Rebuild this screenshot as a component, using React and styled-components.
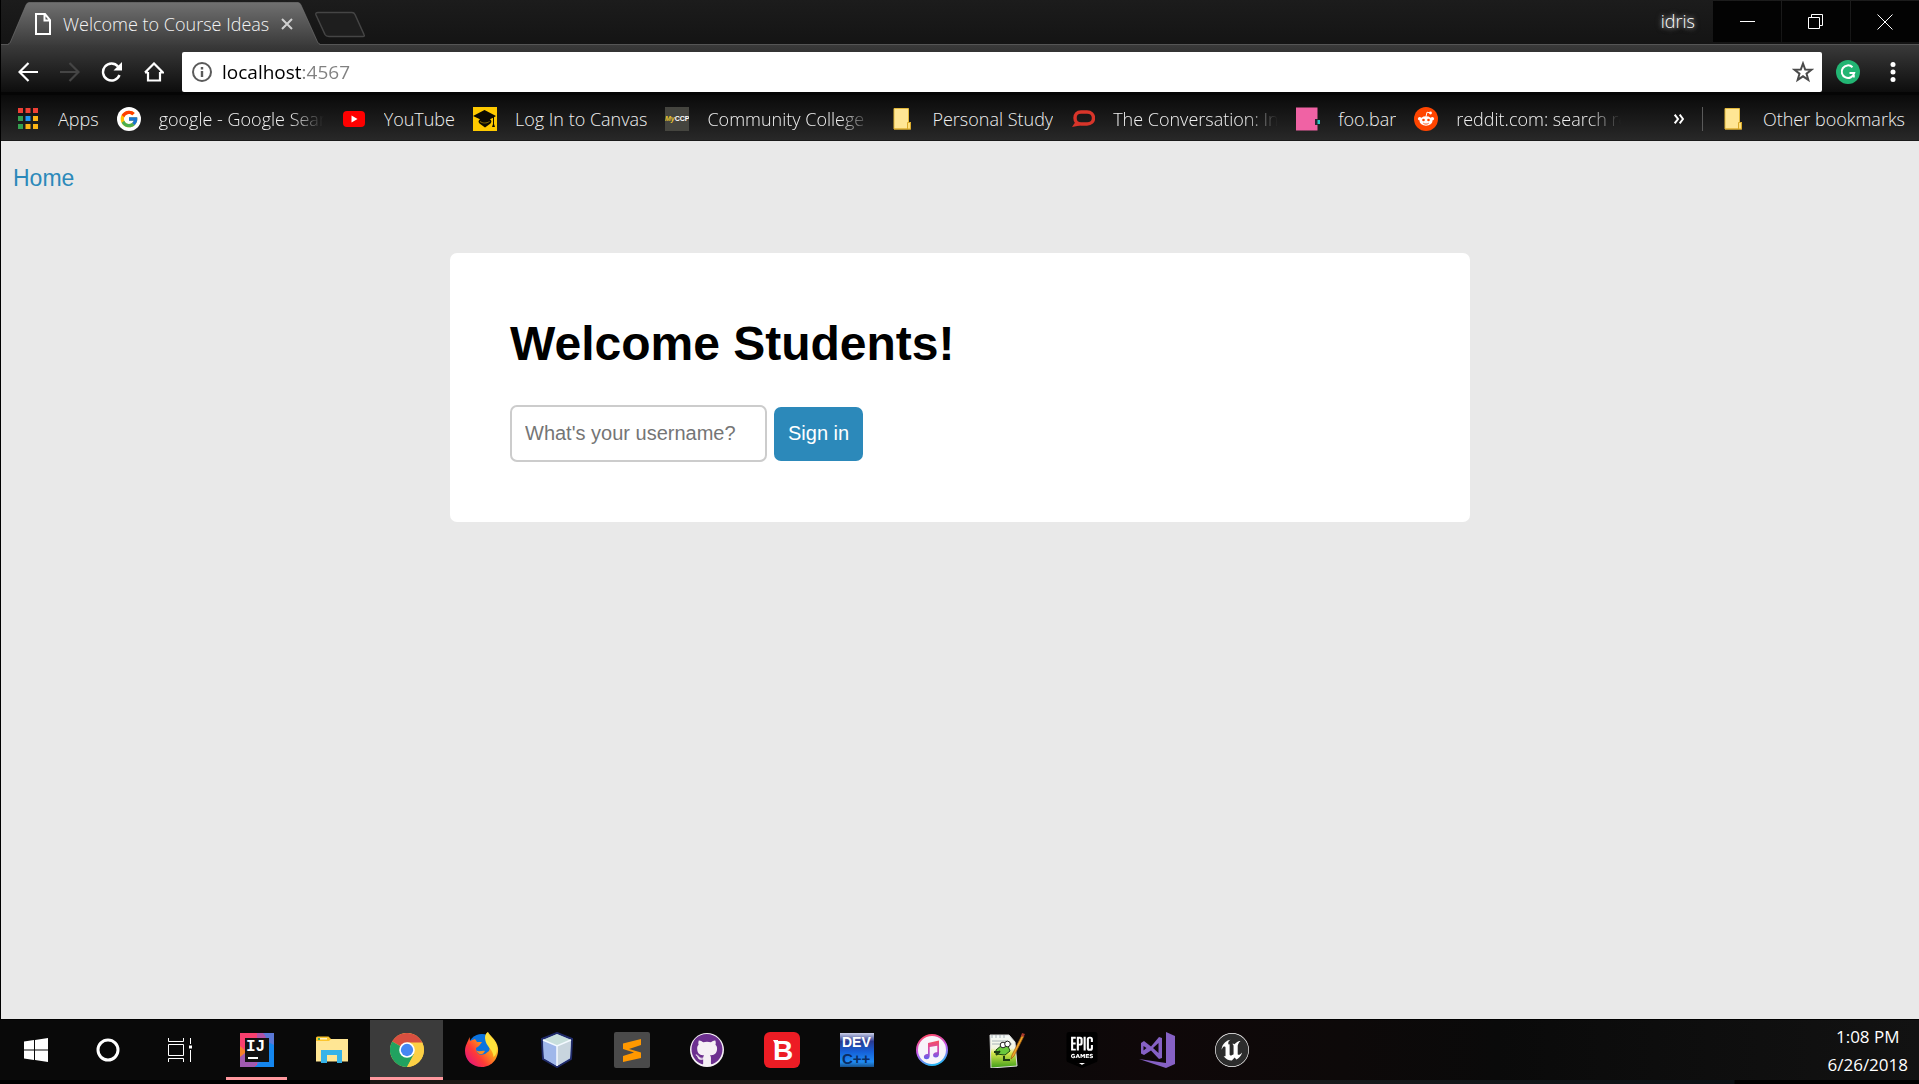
import React from 'react';
import styled, { createGlobalStyle } from 'styled-components';
import { FcGoogle } from 'react-icons/fc';
import { FaGithub } from 'react-icons/fa';
import { SiEpicgames, SiUnrealengine } from 'react-icons/si';

const GlobalStyle = createGlobalStyle`
  * { box-sizing: border-box; }
  body { margin: 0; background: #000; }
  button, input { font: inherit; }
`;

const chromeFont = `'Open Sans', 'Noto Sans', sans-serif`;

const Screen = styled.div`
  min-height: 100vh;
  display: flex;
  flex-direction: column;
  font-family: ${chromeFont};
`;

const Browser = styled.div`
  flex: 1;
  display: flex;
  flex-direction: column;
  border-left: 1px solid #000;
`;

/* ---------- title bar ---------- */
const TitleBar = styled.header`
  height: 44px;
  display: flex;
  align-items: flex-start;
  background: linear-gradient(#1c1c1c, #141414);
`;

const Tab = styled.div`
  position: relative;
  width: 312px;
  height: 44px;
  margin-left: 7px;
  padding: 4px 29px 0 27px;
  display: flex;
  align-items: center;
  gap: 12px;
  color: #f4f4f4;
`;

const TabShape = styled.svg`
  position: absolute;
  left: 0;
  bottom: -1px;
`;

const TabTitle = styled.span`
  position: relative;
  flex: 1;
  white-space: nowrap;
  font-size: 18px;
  font-weight: 300;
  line-height: 24px;
`;

const TabGlyph = styled.svg`
  position: relative;
  flex: none;
`;

const PlainButton = styled.button`
  border: 0;
  padding: 0;
  background: none;
  color: inherit;
  display: flex;
  align-items: center;
  justify-content: center;
  flex: none;
`;

const NewTab = styled(PlainButton)`
  margin: 11px 0 0 -6px;
`;

const Profile = styled(PlainButton)`
  margin-left: auto;
  margin-right: 18px;
  height: 42px;
  color: #fff;
  font-size: 18px;
  font-weight: 300;
  text-shadow: 0 0 4px #aaa, 0 0 6px #777;
`;

const WindowControls = styled.div`
  display: flex;
  gap: 1px;
  padding-top: 1px;
`;

const WindowButton = styled(PlainButton)`
  width: 68px;
  height: 41px;
  background: #030303;
`;

/* ---------- toolbar ---------- */
const Toolbar = styled.div`
  height: 51px;
  display: flex;
  align-items: center;
  padding: 0 4px 0 6px;
  background: linear-gradient(#3a3a3a, #0d0d0d);
  border-top: 1px solid #555;
  border-bottom: 3px solid #050505;
`;

const ToolButton = styled(PlainButton)`
  width: 42px;
  height: 40px;
`;

const Omnibox = styled.label`
  flex: 1;
  height: 40px;
  margin: 7px 3px 0 7px;
  padding: 0 8px 0 10px;
  display: flex;
  align-items: center;
  background: #fff;
  border-radius: 2px;
`;

const Address = styled.input`
  flex: 1;
  min-width: 0;
  height: 36px;
  margin-left: 10px;
  padding: 0;
  border: 0;
  outline: 0;
  font-size: 19px;
  color: transparent;
  background: linear-gradient(90deg, #000 81px, #808080 81px);
  background-clip: text;
  -webkit-background-clip: text;
`;

const ToolGroup = styled.div`
  display: flex;
  padding-top: 7px;
`;

const WideToolButton = styled(ToolButton)`
  width: 45px;
`;

/* ---------- bookmarks ---------- */
const Bookmarks = styled.nav`
  height: 46px;
  display: flex;
  align-items: center;
  gap: 18px;
  padding: 2px 14px 0 15px;
  background: linear-gradient(#0a0a0a, #282828);
  border-bottom: 1px solid #1a1a1a;
`;

const Bookmark = styled.a`
  display: flex;
  align-items: center;
  gap: 18px;
  flex: none;
  color: #f0f0f0;
  text-decoration: none;
  font-size: 18px;
  font-weight: 300;
  line-height: 26px;
`;

const BookmarkIcon = styled.span`
  width: 24px;
  height: 24px;
  display: flex;
  align-items: center;
  justify-content: center;
`;

const BookmarkLabel = styled.span`
  white-space: nowrap;
  overflow: hidden;
  width: ${(p) => (p.$clipped ? '165px' : 'auto')};
  mask-image: ${(p) => (p.$clipped ? 'linear-gradient(90deg, #000 132px, transparent 165px)' : 'none')};
`;

const Overflow = styled(PlainButton)`
  margin-left: auto;
`;

const Divider = styled.span`
  width: 1px;
  height: 24px;
  background: #5a5a5a;
`;

/* ---------- page ---------- */
const Page = styled.main`
  flex: 1;
  background: #e9e9e9;
  font-family: 'Liberation Sans', Arial, sans-serif;
`;

const PageNav = styled.div`
  padding: 23px 12px 0;
  font-size: 23px;
  line-height: 28px;
`;

const HomeLink = styled.a`
  color: #2c89ba;
  text-decoration: none;
`;

const Card = styled.section`
  width: calc(100% - 898px);
  min-width: 560px;
  margin: 61px auto 0;
  padding: 60px;
  background: #fff;
  border-radius: 7px;
`;

const Heading = styled.h1`
  margin: 0 0 30px;
  font-size: 48px;
  line-height: 62px;
  color: #000;
`;

const Form = styled.form`
  display: flex;
  align-items: center;
  gap: 7px;
`;

const Username = styled.input`
  width: 257px;
  height: 57px;
  padding: 0 13px;
  border: 2px solid #ccc;
  border-radius: 7px;
  font-size: 20px;
  background: #fff;
  &::placeholder { color: #757575; opacity: 1; }
`;

const SignIn = styled.button`
  height: 54px;
  padding: 0 14px;
  border: 0;
  border-radius: 7px;
  font-size: 20px;
  color: #fff;
  background: #2c89ba;
`;

/* ---------- taskbar ---------- */
const Taskbar = styled.footer`
  height: 61px;
  display: flex;
  border-top: 1px solid #000;
  background: linear-gradient(90deg, #090909 0, #090909 50%, #0f0809 60%, #0d0909 70%, #0a0a0a 78%, #121212 100%);
`;

const SystemButton = styled(PlainButton)`
  width: 72px;
`;

const Apps = styled.div`
  display: flex;
  gap: 2px;
  margin-left: 4px;
`;

const AppButton = styled(PlainButton)`
  position: relative;
  width: 73px;
  background: ${(p) => (p.$active ? '#3b3b3b' : 'none')};
  &::after {
    content: '';
    display: ${(p) => (p.$active || p.$running ? 'block' : 'none')};
    position: absolute;
    bottom: 0;
    left: ${(p) => (p.$active ? '0' : '6px')};
    right: ${(p) => (p.$active ? '0' : '6px')};
    height: 3px;
    background: #ff989e;
  }
`;

const Clock = styled.time`
  margin-left: auto;
  padding: 3px 11px 0 0;
  color: #fff;
  font-size: 17px;
  line-height: 28px;
  text-align: center;
`;

const Desktop = styled.div`
  height: 4px;
  background: linear-gradient(90deg, #000 370px, #1c1714 370px, #201c18 760px, #1b1d1e 1200px, #0a1014 1734px, #000 1735px);
`;

/* ---------- icons ---------- */
const Folder = () => (
  <svg width="18" height="24" viewBox="0 0 18 24">
    <path d="M1 1.5h14.5v14H18V22H1z" fill="#ffe694" stroke="#e3b93c" strokeWidth="1" />
    <path d="M1 22h16.5v-6.5h-3V22" fill="#ffe07a" stroke="#d9a92a" strokeWidth="1" />
  </svg>
);

const AppsGrid = () => {
  const colors = ['#ee4035', '#ee4035', '#ee4035', '#34a050', '#2196f3', '#fdb515', '#34a050', '#fdb515', '#fdb515'];
  return (
    <svg width="20" height="21" viewBox="0 0 20 21">
      {colors.map((c, i) => (
        <rect key={i} x={(i % 3) * 7.5} y={Math.floor(i / 3) * 8} width="5" height="5" fill={c} />
      ))}
    </svg>
  );
};

const GoogleMark = () => (
  <svg width="24" height="24" viewBox="0 0 24 24">
    <circle cx="12" cy="12" r="12" fill="#fff" />
    <FcGoogle x="2" y="2" size="20" />
  </svg>
);

const YouTube = () => (
  <svg width="22" height="16" viewBox="0 0 22 16">
    <rect width="22" height="16" rx="4" fill="#f00" />
    <path d="M8.5 4.5l6 3.5-6 3.5z" fill="#fff" />
  </svg>
);

const Canvas = () => (
  <svg width="24" height="24" viewBox="0 0 24 24">
    <rect width="24" height="24" fill="#ffca00" />
    <path d="M11.5 3L23 9l-2 1.200V17l1 3h-3l1-3v-6.300l-3 1.600c2 1.500 1.500 3 .5 4.200l-5.500 4-5.500-4c-1.500-1.500-1.200-3 .5-4.200L0 9z" fill="#0c0a02" />
    <path d="M7 14.500c3 2 6.500 2 9.500 0" stroke="#8a6f08" strokeWidth="1" fill="none" />
  </svg>
);

const MyCcp = () => (
  <svg width="24" height="24" viewBox="0 0 24 24" fontFamily="Liberation Sans, sans-serif" fontSize="7" fontWeight="700">
    <rect width="24" height="24" fill="#45453f" />
    <text x="0" y="14" fill="#fff"><tspan fill="#e8c531" fontStyle="italic">My</tspan>CCP</text>
  </svg>
);

const Conversation = () => (
  <svg width="24" height="18" viewBox="0 0 24 18">
    <path d="M10 2h6c4 0 6.500 2.500 6.500 6S20 14 16 14h-6c-4 0-6-2.500-6-6s2-6 6-6z" fill="none" stroke="#d8352a" strokeWidth="3.400" />
    <path d="M5 11l-4 6 8-1.500z" fill="#d8352a" />
  </svg>
);

const FooBar = () => (
  <svg width="24" height="24" viewBox="0 0 24 24">
    <rect y="0.500" width="21.500" height="23" fill="#f062a4" />
    <rect x="19" y="12" width="3" height="6" fill="#222b33" />
    <rect x="21.500" y="13" width="2.500" height="4" fill="#2cc4c4" />
  </svg>
);

const Reddit = () => (
  <svg width="24" height="24" viewBox="0 0 24 24">
    <circle cx="12" cy="12" r="12" fill="#ff4500" />
    <ellipse cx="12" cy="14" rx="6.500" ry="4.700" fill="#fff" />
    <circle cx="5.700" cy="11.700" r="1.800" fill="#fff" />
    <circle cx="18.300" cy="11.700" r="1.800" fill="#fff" />
    <path d="M12 9.500l1-4.300 3 .7" fill="none" stroke="#fff" strokeWidth="1" />
    <circle cx="16.500" cy="6" r="1.400" fill="#fff" />
    <circle cx="9.500" cy="13" r="1.300" fill="#ff4500" />
    <circle cx="14.500" cy="13" r="1.300" fill="#ff4500" />
    <path d="M9.300 16.200c1.500 1.200 3.900 1.200 5.400 0" fill="none" stroke="#ff4500" strokeWidth="0.900" />
  </svg>
);

const IntelliJ = () => (
  <svg width="34" height="34" viewBox="0 0 34 34">
    <rect width="34" height="34" fill="#f8406f" />
    <path d="M17 0h17v34H17z" fill="#4a7be0" />
    <path d="M17 0h6l6 6H17z" fill="#b052a8" />
    <path d="M26 0h8v34H14l14-10z" fill="#1486ee" />
    <path d="M24 0h10v12l-6-3z" fill="#5a78d6" />
    <path d="M0 13l7 6v10L0 26z" fill="#f4812a" />
    <path d="M0 24l5-4v9h13l-4 5H0z" fill="#a05ab0" />
    <rect x="5" y="5" width="24" height="24" fill="#111" />
    <text x="6" y="18" fill="#fff" fontFamily="Liberation Mono, monospace" fontSize="16" fontWeight="700">IJ</text>
    <rect x="8" y="24" width="10" height="2" fill="#fff" />
  </svg>
);

const Explorer = () => (
  <svg width="32" height="28" viewBox="0 0 32 28">
    <path d="M0 2q0-1.500 1.500-1.500h11L15 3v4H0z" fill="#fcc52c" />
    <rect x="2" y="2" width="9" height="1.500" fill="#fff2c0" />
    <rect x="2" y="2" width="2" height="2" fill="#3fae6a" />
    <path d="M0 5h13l2-2h17v22.500H0z" fill="#ffe694" />
    <path d="M5 27V14h21v13h-5v-8H11v8z" fill="#36b3e8" />
  </svg>
);

const Chrome = () => (
  <svg width="34" height="34" viewBox="0 0 48 48">
    <circle cx="24" cy="24" r="24" fill="#fcd045" />
    <path d="M24 24L3.200 12A24 24 0 0 1 44.800 12L46 14H24z" fill="#d84f40" />
    <path d="M24 24L3.200 12A24 24 0 0 0 24 48L34.400 30z" fill="#21a260" />
    <path d="M24 13.500h21.500A24 24 0 0 1 24 48l9.500-18z" fill="#fcd045" />
    <circle cx="24" cy="24" r="11" fill="#fff" />
    <circle cx="24" cy="24" r="8.700" fill="#4587f3" />
  </svg>
);

const Firefox = () => (
  <svg width="34" height="36" viewBox="0 0 34 36">
    <defs>
      <linearGradient id="fx" x1="1" y1="0.100" x2="0.100" y2="0.900">
        <stop offset="0" stopColor="#fff14a" />
        <stop offset="0.400" stopColor="#ff9a1a" />
        <stop offset="0.700" stopColor="#ff3b36" />
        <stop offset="1" stopColor="#e3157a" />
      </linearGradient>
    </defs>
    <circle cx="17" cy="16" r="14" fill="#0a73e0" />
    <path d="M4.500 5L5 9l5-2 2 3h5l-3 4-3 2c0 6 4 8 9 6l4-3c2-5 0-9-3-13-.5-3 .5-5 2-6 2 4 9 8 10 16 1 10-6 19-16 19S0 28 0 19C0 13 3 10 4.500 5z" fill="url(#fx)" />
    <path d="M20 6c0-3 1-4.500 2.500-6 1 4 7 7 9 13 1 5 0 10-3 12 0-8-8-10-8.500-19z" fill="#ffe23b" />
    <path d="M11 18c3 3 6 0 9 1-2 4-6 5-9-1z" fill="#ff8a1d" />
  </svg>
);

const NetBeans = () => (
  <svg width="34" height="36" viewBox="0 0 34 36">
    <path d="M17 1l15 6-1 20-14 8L3 27 2 7z" fill="#a3b7ea" stroke="#1f2a68" strokeWidth="2" />
    <path d="M17 2l14 6-14 6L3 8z" fill="#c8dfdc" />
    <path d="M3 8l14 6v20L4 26z" fill="#9fb7ea" />
    <path d="M31 8l-14 6v20l13-8z" fill="#c8d5de" />
    <path d="M3 8l14 6 14-6M17 14v20" fill="none" stroke="#f3f9ff" strokeWidth="1.500" />
  </svg>
);

const Sublime = () => (
  <svg width="36" height="36" viewBox="0 0 36 36">
    <rect width="36" height="36" rx="2" fill="#4a4a4a" />
    <path d="M27 7v6L15 17l12 3.500v5.500L9 30v-6l11-3.500L9 17v-5.500z" fill="#ff9800" />
  </svg>
);

const GitHub = () => (
  <svg width="36" height="36" viewBox="0 0 36 36">
    <circle cx="18" cy="18" r="17" fill="#f5f0f5" />
    <FaGithub x="2" y="1.500" size="32" color="#6d3090" />
  </svg>
);

const Bitdefender = () => (
  <svg width="36" height="36" viewBox="0 0 36 36">
    <rect width="36" height="36" rx="6" fill="#ed1c24" />
    <path d="M9 8h5v3.500h-3z" fill="#fff" />
    <text x="9" y="28" fill="#fff" fontFamily="Liberation Sans, sans-serif" fontSize="28" fontWeight="700">B</text>
  </svg>
);

const DevCpp = () => (
  <svg width="34" height="34" viewBox="0 0 34 34" fontFamily="Liberation Sans, sans-serif" fontWeight="700">
    <defs>
      <linearGradient id="dev" x1="0" y1="0" x2="0" y2="1">
        <stop offset="0" stopColor="#ccd0e8" />
        <stop offset="0.250" stopColor="#2a3a90" />
        <stop offset="0.550" stopColor="#1560d8" />
        <stop offset="0.850" stopColor="#1f8cf4" />
        <stop offset="1" stopColor="#18528c" />
      </linearGradient>
    </defs>
    <rect width="34" height="34" fill="url(#dev)" />
    <text x="2" y="14" fontSize="14" fill="#fff">DEV</text>
    <text x="2" y="31" fontSize="15" fill="#0b2c62">C++</text>
  </svg>
);

const ITunes = () => (
  <svg width="32" height="32" viewBox="0 0 32 32">
    <defs>
      <linearGradient id="itr" x1="0.300" y1="0" x2="0.600" y2="1">
        <stop offset="0" stopColor="#ff4a6a" />
        <stop offset="0.500" stopColor="#c05af0" />
        <stop offset="1" stopColor="#26b8f4" />
      </linearGradient>
      <linearGradient id="itn" x1="0" y1="0" x2="0" y2="1">
        <stop offset="0" stopColor="#f8505a" />
        <stop offset="0.500" stopColor="#d048b8" />
        <stop offset="1" stopColor="#5a60f0" />
      </linearGradient>
    </defs>
    <circle cx="16" cy="16" r="15" fill="#f7f4fa" stroke="url(#itr)" strokeWidth="2" />
    <path d="M12 9l11-2.500v13.700c0 2-1.400 3.300-3.200 3.300-1.600 0-2.700-1-2.700-2.300 0-2.600 2.700-2.700 4.200-3.200v-6.300L13.700 13v9c0 2-1.400 3.300-3.200 3.300-1.600 0-2.600-1-2.600-2.300 0-2.700 2.700-2.700 4.100-3.200z" fill="url(#itn)" />
  </svg>
);

const Notepad = () => (
  <svg width="36" height="36" viewBox="0 0 36 36">
    <defs>
      <linearGradient id="npp" x1="0" y1="0" x2="0" y2="1">
        <stop offset="0" stopColor="#f6fafa" />
        <stop offset="0.400" stopColor="#f3f5e0" />
        <stop offset="0.550" stopColor="#d8e84c" />
        <stop offset="1" stopColor="#3c9c18" />
      </linearGradient>
    </defs>
    <path d="M1 3h19l6 7 2 24-26 2z" fill="url(#npp)" stroke="#ddd" strokeWidth="1" />
    <path d="M3 3v3M7 3v3M11 3v3M15 3v3M3 9h16M3 12h20" stroke="#a8b4b8" strokeWidth="1" />
    <path d="M7 18l6-5 6 1 2 5-5 4-9-1z" fill="#6ac83c" stroke="#1c4a10" strokeWidth="1" />
    <circle cx="14" cy="13" r="2.800" fill="#fff" stroke="#222" />
    <circle cx="18.500" cy="12" r="2.800" fill="#fff" stroke="#222" />
    <path d="M5 20h6M7 23l4-4M15 24v4h6" stroke="#1d3b12" strokeWidth="2" fill="none" />
    <path d="M33 3l2 1-10 20-3 3 1-4z" fill="#f3a626" stroke="#9c5a14" strokeWidth="0.700" />
    <path d="M33 1l3 1-1.500 3-2.500-1z" fill="#a83a2c" />
  </svg>
);

const Epic = () => (
  <svg width="34" height="36" viewBox="0 0 34 36">
    <rect x="4" y="3" width="26" height="26" fill="#fff" />
    <path d="M11 29h12l-6 4z" fill="#fff" />
    <SiEpicgames x="-1" y="0" size="36" color="#000" />
  </svg>
);

const VisualStudio = () => (
  <svg width="36" height="36" viewBox="0 0 36 36">
    <path d="M27 0l9 4v28l-9 4-27-9 27 4z" fill="#8661c5" />
    <path fillRule="evenodd" d="M2 11l3-2 7 5.500L20 5l3 1v20l-3 1-8-8.500L5 23l-3-1.500zm2.500 3v4.500L7.500 16zM19.500 11L14 16l5.500 5z" fill="#8661c5" />
  </svg>
);

const Unreal = () => (
  <svg width="34" height="34" viewBox="0 0 34 34">
    <circle cx="17" cy="17" r="16.500" fill="#2c2c2c" />
    <SiUnrealengine x="0" y="0" size="34" color="#fff" />
  </svg>
);

const bookmarks = [
  { icon: <AppsGrid />, label: 'Apps' },
  { icon: <GoogleMark />, label: 'google - Google Sear', clipped: true },
  { icon: <YouTube />, label: 'YouTube' },
  { icon: <Canvas />, label: 'Log In to Canvas' },
  { icon: <MyCcp />, label: 'Community College', clipped: true },
  { icon: <Folder />, label: 'Personal Study' },
  { icon: <Conversation />, label: 'The Conversation: In', clipped: true },
  { icon: <FooBar />, label: 'foo.bar' },
  { icon: <Reddit />, label: 'reddit.com: search re', clipped: true },
];

const apps = [
  { name: 'IntelliJ IDEA', icon: <IntelliJ />, running: true },
  { name: 'File Explorer', icon: <Explorer /> },
  { name: 'Google Chrome', icon: <Chrome />, active: true },
  { name: 'Firefox', icon: <Firefox /> },
  { name: 'NetBeans', icon: <NetBeans /> },
  { name: 'Sublime Text', icon: <Sublime /> },
  { name: 'GitHub Desktop', icon: <GitHub /> },
  { name: 'Bitdefender', icon: <Bitdefender /> },
  { name: 'Dev-C++', icon: <DevCpp /> },
  { name: 'iTunes', icon: <ITunes /> },
  { name: 'Notepad++', icon: <Notepad /> },
  { name: 'Epic Games', icon: <Epic /> },
  { name: 'Visual Studio', icon: <VisualStudio /> },
  { name: 'Unreal Engine', icon: <Unreal /> },
];

export default function App() {
  return (
    <Screen>
      <GlobalStyle />
      <Browser>
        <TitleBar>
          <Tab>
            <TabShape width="312" height="43" viewBox="0 0 312 43">
              <defs>
                <linearGradient id="tab" x1="0" y1="0" x2="0" y2="1">
                  <stop offset="0" stopColor="#707070" />
                  <stop offset="1" stopColor="#3b3b3b" />
                </linearGradient>
              </defs>
              <path d="M0 43L2 41 18 3Q19 0.500 21 0.500H290Q292 0.500 293 3L310 41 312 43z" fill="url(#tab)" />
              <path d="M0 42L2 41 18 3Q19 0.500 21 0.500H290Q292 0.500 293 3L310 41 312 42" fill="none" stroke="#777" strokeOpacity="0.600" />
            </TabShape>
            <TabGlyph width="16" height="22" viewBox="0 0 16 22" fill="none" stroke="#fff" strokeWidth="2">
              <path d="M1 1h9l5 6v14H1zM9.500 1v6.500H15" />
            </TabGlyph>
            <TabTitle>Welcome to Course Ideas</TabTitle>
            <PlainButton aria-label="Close tab">
              <TabGlyph width="12" height="12" viewBox="0 0 12 12" stroke="#d0d0d0" strokeWidth="2">
                <path d="M1 1l10 10M11 1L1 11" />
              </TabGlyph>
            </PlainButton>
          </Tab>
          <NewTab aria-label="New tab">
            <svg width="52" height="27" viewBox="0 0 52 27">
              <path d="M4 1.500h34q2 0 3 2l9 20q1 2-1 2H15q-3 0-4-2L2 4Q1 1.500 4 1.500z" fill="#1e1e1e" stroke="#454545" strokeWidth="1.500" />
            </svg>
          </NewTab>
          <Profile>idris</Profile>
          <WindowControls>
            <WindowButton aria-label="Minimize">
              <svg width="15" height="15" stroke="#fff" fill="none"><path d="M0 7.500h15" /></svg>
            </WindowButton>
            <WindowButton aria-label="Restore">
              <svg width="16" height="16" stroke="#fff" fill="none"><path d="M.5 3.500h11v11H.5zM3.500 3.500v-3h11v11h-3" /></svg>
            </WindowButton>
            <WindowButton aria-label="Close">
              <svg width="16" height="16" stroke="#fff" fill="none"><path d="M.5.500l15 15M15.500.500l-15 15" /></svg>
            </WindowButton>
          </WindowControls>
        </TitleBar>

        <Toolbar>
          <ToolGroup>
            <ToolButton aria-label="Back">
              <svg width="20" height="20" viewBox="0 0 20 20" fill="none" stroke="#fff" strokeWidth="2.200"><path d="M20 10H2M10.500 1L1.500 10l9 9" /></svg>
            </ToolButton>
            <ToolButton aria-label="Forward">
              <svg width="20" height="20" viewBox="0 0 20 20" fill="none" stroke="#454545" strokeWidth="2.200"><path d="M0 10h18M9.500 1l9 9-9 9" /></svg>
            </ToolButton>
            <ToolButton aria-label="Reload">
              <svg width="22" height="20" viewBox="0 0 22 20" fill="none" stroke="#fff" strokeWidth="2.400"><path d="M18.500 13a8.500 8.500 0 1 1-1.500-8.500" /><path d="M21 0v8.500h-8.500z" fill="#fff" stroke="none" /></svg>
            </ToolButton>
            <ToolButton aria-label="Home page">
              <svg width="20" height="20" viewBox="0 0 20 20" fill="none" stroke="#fff" strokeWidth="2.200"><path d="M4 10v8.500h12V10M1 10.500L10 1.500l9 9h-3M1 10.500h3" /></svg>
            </ToolButton>
          </ToolGroup>
          <Omnibox>
            <svg width="20" height="20" viewBox="0 0 20 20" fill="none" stroke="#5a5a5a" strokeWidth="2"><circle cx="10" cy="10" r="9" /><path d="M10 9v6M10 5v2.500" strokeWidth="2.400" /></svg>
            <Address aria-label="Address" defaultValue="localhost:4567" />
            <PlainButton aria-label="Bookmark this page">
              <svg width="22" height="22" viewBox="0 0 22 22" fill="none" stroke="#4a4a4a" strokeWidth="2"><path d="M11 2.500l2.200 6 6.300.2-5 3.900 1.800 6.200L11 15.300l-5.300 3.500 1.800-6.200-5-3.900 6.300-.2z" /></svg>
            </PlainButton>
          </Omnibox>
          <ToolGroup>
            <WideToolButton aria-label="Grammarly">
              <svg width="24" height="24" viewBox="0 0 24 24" fill="none"><circle cx="12" cy="12" r="12" fill="#22b573" /><path d="M16.500 7.200a6.300 6.300 0 1 0 1.700 5.800h-4.700M17.800 12.500v5" stroke="#fff" strokeWidth="2" /></svg>
            </WideToolButton>
            <WideToolButton aria-label="Menu">
              <svg width="6" height="20" viewBox="0 0 6 20" fill="#fff"><circle cx="3" cy="2.500" r="2.500" /><circle cx="3" cy="10" r="2.500" /><circle cx="3" cy="17.500" r="2.500" /></svg>
            </WideToolButton>
          </ToolGroup>
        </Toolbar>

        <Bookmarks aria-label="Bookmarks">
          {bookmarks.map((b) => (
            <Bookmark key={b.label} href="#">
              <BookmarkIcon>{b.icon}</BookmarkIcon>
              <BookmarkLabel $clipped={b.clipped}>{b.label}</BookmarkLabel>
            </Bookmark>
          ))}
          <Overflow aria-label="More bookmarks">
            <svg width="10" height="10" viewBox="0 0 10 10" fill="none" stroke="#fff" strokeWidth="2"><path d="M.7.700L4 5 .7 9.300M5.700.700L9 5 5.700 9.300" /></svg>
          </Overflow>
          <Divider />
          <Bookmark href="#">
            <BookmarkIcon><Folder /></BookmarkIcon>
            <BookmarkLabel>Other bookmarks</BookmarkLabel>
          </Bookmark>
        </Bookmarks>

        <Page>
          <PageNav><HomeLink href="#">Home</HomeLink></PageNav>
          <Card>
            <Heading>Welcome Students!</Heading>
            <Form onSubmit={(e) => e.preventDefault()}>
              <Username aria-label="Username" placeholder="What's your username?" />
              <SignIn>Sign in</SignIn>
            </Form>
          </Card>
        </Page>
      </Browser>

      <Taskbar>
        <SystemButton aria-label="Start">
          <svg width="24" height="24" viewBox="0 0 24 24" fill="#fff"><path d="M0 3.500L10 2v9.500H0zM11 1.900L24 0v11.500H11zM0 12.500h10V22L0 20.500zM11 12.500h13V24l-13-1.900z" /></svg>
        </SystemButton>
        <SystemButton aria-label="Cortana">
          <svg width="24" height="24" fill="none" stroke="#fff" strokeWidth="3"><circle cx="12" cy="12" r="10" /></svg>
        </SystemButton>
        <SystemButton aria-label="Task view">
          <svg width="24" height="24" fill="none" stroke="#fff"><path d="M.5 0v3.500h15V0M.5 6.500h15v11H.5zM.5 24v-3.500h15V24M22.500 0v6M22.500 12v12" /><rect x="21" y="7.500" width="3" height="3" fill="#fff" stroke="none" /></svg>
        </SystemButton>
        <Apps>
          {apps.map((a) => (
            <AppButton key={a.name} aria-label={a.name} $active={a.active} $running={a.running}>{a.icon}</AppButton>
          ))}
        </Apps>
        <Clock>1:08 PM<br />6/26/2018</Clock>
      </Taskbar>
      <Desktop />
    </Screen>
  );
}
